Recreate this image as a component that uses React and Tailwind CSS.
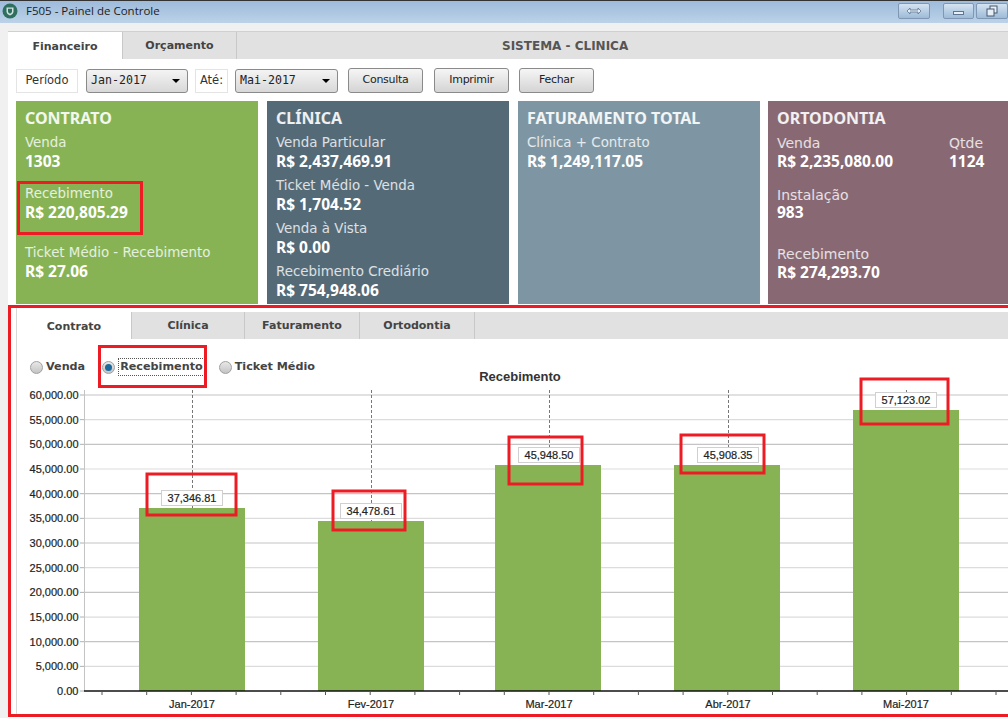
const sans = 'font-["DejaVu_Sans",sans-serif]';

const bars = [
  { label: 'Jan-2017', x: 139, cx: 192, value: '37,346.81', top: 508, tagY: 498, box: [147, 474, 89, 41] },
  { label: 'Fev-2017', x: 318, cx: 371, value: '34,478.61', top: 521, tagY: 511, box: [333, 491, 72, 39] },
  { label: 'Mar-2017', x: 495, cx: 549, value: '45,948.50', top: 465, tagY: 455, box: [509, 437, 73, 47] },
  { label: 'Abr-2017', x: 674, cx: 728, value: '45,908.35', top: 465, tagY: 455, box: [681, 435, 83, 38] },
  { label: 'Mai-2017', x: 853, cx: 906, value: '57,123.02', top: 410, tagY: 400, box: [861, 379, 87, 45] },
];

const yLabels = [
  '60,000.00', '55,000.00', '50,000.00', '45,000.00', '40,000.00', '35,000.00', '30,000.00',
  '25,000.00', '20,000.00', '15,000.00', '10,000.00', '5,000.00', '0.00',
];

function Chart() {
  const ticks = [];
  for (let i = 0; i < 21; i++) ticks.push(102 + i * 44.7);

  return (
    <svg width="997" height="345" viewBox="11 370 997 345" className="block">
      <text x="520" y="381" textAnchor="middle" fontFamily="Liberation Sans" fontWeight="700" fontSize="13" fill="#333">
        Recebimento
      </text>

      {yLabels.map((l, i) => {
        const y = 395 + i * 24.67;
        return (
          <g key={l}>
            {i < 12 && <line x1="84" x2="1008" y1={y} y2={y} stroke={i % 2 ? '#dcdcdc' : '#c4c4c4'} strokeWidth="1.2" />}
            <line x1="80" x2="84" y1={y} y2={y} stroke="#b0b0b0" />
            <text x="78.500" y={y + 4} textAnchor="end" fontFamily="Liberation Sans" fontSize="11" stroke="#222" strokeWidth="0.2" fill="#222">
              {l}
            </text>
          </g>
        );
      })}
      <line x1="84.5" x2="84.5" y1="390" y2="691" stroke="#c4c4c4" />

      {bars.map((b) => (
        <g key={b.label}>
          <line x1={b.cx + 0.5} x2={b.cx + 0.5} y1="390" y2={b.top} stroke="#777" strokeDasharray="3 2" />
          <rect x={b.x} y={b.top} width="106" height={691 - b.top} fill="#87b355" />
          <rect x={b.cx - 30.5} y={b.tagY - 7.5} width="61" height="15" fill="#fff" stroke="#d0d0d0" />
          <text x={b.cx} y={b.tagY + 4} textAnchor="middle" fontFamily="Liberation Sans" fontSize="11" stroke="#222" strokeWidth="0.2" fill="#222">
            {b.value}
          </text>
          <text x={b.cx} y="708" textAnchor="middle" fontFamily="Liberation Sans" fontSize="11" stroke="#222" strokeWidth="0.2" fill="#222">
            {b.label}
          </text>
          <rect x={b.box[0]} y={b.box[1]} width={b.box[2]} height={b.box[3]} fill="none" stroke="#ed1c24" strokeWidth="3" />
        </g>
      ))}

      <line x1="84" x2="1008" y1="691" y2="691" stroke="#111" strokeWidth="1.6" />
      {ticks.map((x) => (
        <line key={x} x1={x} x2={x} y1="691" y2="695" stroke="#555" />
      ))}
    </svg>
  );
}

function Stat({ label, value, className = '', labelClass = 'text-[13.4px]' }) {
  return (
    <div className={`flex flex-col ${className}`}>
      <div className={`${labelClass} leading-[20px] text-white/80`}>{label}</div>
      <div className='-mt-[2px] mb-[2px] font-["Noto_Sans",sans-serif] text-[15.5px] leading-[20px] font-bold text-white'>{value}</div>
    </div>
  );
}

function Card({ title, color, children }) {
  return (
    <div className={`relative w-[242px] shrink-0 h-[203px] pl-[9px] pt-[6px] overflow-hidden ${color}`}>
      <div className='font-["Noto_Sans",sans-serif] text-[16px] leading-[22px] font-bold text-white/90 mb-[4px]'>{title}</div>
      {children}
    </div>
  );
}

function Combo({ value, className }) {
  return (
    <div className={`flex items-center justify-between h-[24px] px-[4px] rounded-[3px] border border-[#8a8a8a] bg-gradient-to-b from-[#f4f4f4] to-[#d8d8d8] ${className}`}>
      <span className='font-["DejaVu_Sans_Mono",monospace] text-[11.6px] text-[#222]'>{value}</span>
      <span className="w-0 h-0 mr-[3px] border-x-[4px] border-x-transparent border-t-[4px] border-t-black" />
    </div>
  );
}

function Btn({ children, className = '' }) {
  return (
    <div className={`w-[75px] h-[25px] flex items-center justify-center rounded-[3px] border border-[#8a8a8a] bg-gradient-to-b from-[#f6f6f6] to-[#d4d4d4] text-[11px] tracking-[-0.3px] text-[#222] ${className}`}>
      {children}
    </div>
  );
}

function WinBtn({ children, className = '' }) {
  return (
    <div className={`h-[16px] flex items-center justify-center rounded-[2px] border border-[#7f97b3] bg-gradient-to-b from-[#d5e3f1] to-[#9dbbd8] ${className}`}>
      {children}
    </div>
  );
}

function Radio({ checked }) {
  return (
    <span className="w-[13px] h-[13px] rounded-full border border-[#a0a0a0] bg-gradient-to-b from-[#e8e8e8] to-[#c4c4c4] flex items-center justify-center shrink-0">
      {checked && <span className="w-[7px] h-[7px] rounded-full bg-[#1c6a9c]" />}
    </span>
  );
}

function Tab({ children, active, className = '' }) {
  return (
    <div className={`h-[27px] flex items-center justify-center text-[11px] font-bold text-[#444] ${active ? 'bg-white pt-[4px]' : 'bg-[#e1e1e1] border-r border-[#c8c8c8] pt-[2px]'} ${className}`}>
      {children}
    </div>
  );
}

export default function App() {
  return (
    <div className={`w-[1008px] h-[718px] overflow-hidden bg-[#f0f0f0] ${sans}`}>
      {/* title bar */}
      <div className="h-[23px] flex items-center border-t border-[#333] bg-gradient-to-b from-[#9dbbdb] to-[#bcd2e8] pl-[2px] pb-[2px]">
        <svg width="16" height="16" viewBox="0 0 16 16">
          <circle cx="8" cy="8" r="7.5" fill="#2f6f60" />
          <path d="M4.5 4.5h7v4c0 2-1.5 3-3.5 4-2-1-3.5-2-3.5-4z" fill="#cfe3dc" />
          <path d="M6 5.8h4v2.6c0 1-.9 1.7-2 2.3-1.1-.6-2-1.300-2-2.300z" fill="#2f6f60" />
        </svg>
        <span className='ml-[8px] font-["Open_Sans",sans-serif] text-[11.5px] text-[#1c1c1c]'>F505 - Painel de Controle</span>
        <div className="ml-auto flex">
          <WinBtn className="w-[32px] mr-[13px]">
            <svg width="16" height="8" viewBox="0 0 16 8">
              <path d="M1 4l3-3v2h8V1l3 3-3 3V5H4v2z" fill="#e8eef5" stroke="#5d7590" strokeWidth="0.8" />
            </svg>
          </WinBtn>
          <WinBtn className="w-[31px] mr-[2px]">
            <span className="mt-[3px] w-[11px] h-[4px] bg-[#e8eef5] border border-[#5d7590]" />
          </WinBtn>
          <WinBtn className="w-[32px]">
            <svg width="12" height="12" viewBox="0 0 12 12">
              <rect x="4" y="1" width="7" height="7" fill="#e8eef5" stroke="#44586f" />
              <rect x="1" y="4" width="7" height="7" fill="#e8eef5" stroke="#44586f" />
            </svg>
          </WinBtn>
        </div>
      </div>

      {/* main panel */}
      <div className="mt-[8px] ml-[8px] h-[687px] bg-white">
        <div className="flex border-t border-[#d0d0d0]">
          <Tab active className="w-[114px]">Financeiro</Tab>
          <Tab className="w-[115px] border-l">Orçamento</Tab>
          <div className="flex-1 h-[27px] bg-[#e1e1e1] flex items-center pl-[265px] text-[12px] font-bold text-[#555]">
            SISTEMA - CLINICA
          </div>
        </div>

        {/* filters */}
        <div className="flex items-center mt-[9px] ml-[8px] h-[25px]">
          <div className="w-[62px] h-[24px] flex items-center justify-center border border-[#e4e4e4] text-[11.500px] text-[#333]">Período</div>
          <Combo value="Jan-2017" className="w-[102px] ml-[8px]" />
          <div className="w-[33px] h-[24px] ml-[7px] flex items-center justify-center border border-[#e4e4e4] text-[11.500px] text-[#333]">Até:</div>
          <Combo value="Mai-2017" className="w-[103px] ml-[7px]" />
          <Btn className="ml-[10px]">Consulta</Btn>
          <Btn className="ml-[11px]">Imprimir</Btn>
          <Btn className="ml-[10px]">Fechar</Btn>
        </div>

        {/* cards */}
        <div className="flex mt-[8px] ml-[8px] gap-[9px]">
          <Card title="CONTRATO" color="bg-[#87b355]">
            <Stat label="Venda" value="1303" />
            <Stat label="Recebimento" value="R$ 220,805.29" className="mt-[11px]" />
            <Stat label="Ticket Médio - Recebimento" value="R$ 27.06" className="mt-[19px]" />
            <div className="absolute left-[1px] top-[80px] w-[126px] h-[54px] border-[3px] border-[#ed1c24]" />
          </Card>
          <Card title="CLÍNICA" color="bg-[#546a77]">
            <Stat label="Venda Particular" value="R$ 2,437,469.91" />
            <Stat label="Ticket Médio - Venda" value="R$ 1,704.52" className="mt-[3px]" />
            <Stat label="Venda à Vista" value="R$ 0.00" className="mt-[3px]" />
            <Stat label="Recebimento Crediário" value="R$ 754,948.06" className="mt-[3px]" />
          </Card>
          <Card title="FATURAMENTO TOTAL" color="bg-[#7e96a3]">
            <Stat label="Clínica + Contrato" value="R$ 1,249,117.05" />
          </Card>
          <Card title="ORTODONTIA" color="bg-[#886873] -ml-[1px]">
            <div className="flex">
              <Stat label="Venda" value="R$ 2,235,080.00" className="w-[172px]" labelClass="text-[14px]" />
              <Stat label="Qtde" value="1124" labelClass="text-[14px]" />
            </div>
            <Stat label="Instalação" value="983" className="mt-[12px]" labelClass="text-[14px] h-[19px]" />
            <Stat label="Recebimento" value="R$ 274,293.70" className="mt-[20px]" labelClass="text-[14px]" />
          </Card>
        </div>

        {/* chart panel */}
        <div className="mt-[1px] h-[412px] border-[3px] border-r-0 border-[#ed1c24] bg-white">
          <div className="ml-[5px] h-full border-l border-[#d8d8d8]">
            <div className="pt-[4px] flex">
              <Tab active className="w-[114px]">Contrato</Tab>
              <Tab className="w-[114px] border-l">Clínica</Tab>
              <Tab className="w-[115px]">Faturamento</Tab>
              <Tab className="w-[115px]">Ortodontia</Tab>
              <div className="flex-1 h-[27px] bg-[#e1e1e1]" />
            </div>

            <div className="relative h-[31px] box-border flex items-center pl-[13px] pt-[25px] text-[11.2px] font-bold text-[#444]">
              <Radio />
              <span className="ml-[3px]">Venda</span>
              <span className="ml-[17px]"><Radio checked /></span>
              <span className="ml-[3px] px-[1px] border border-dotted border-[#555]">Recebimento</span>
              <span className="ml-[14px]"><Radio /></span>
              <span className="ml-[3px]">Ticket Médio</span>
              <div className="absolute left-[81px] top-[6px] w-[109px] h-[43px] border-[3px] border-[#ed1c24]" />
            </div>

            <div className="-ml-[6px]">
              <Chart />
            </div>
          </div>
        </div>
      </div>
    </div>
  );
}
